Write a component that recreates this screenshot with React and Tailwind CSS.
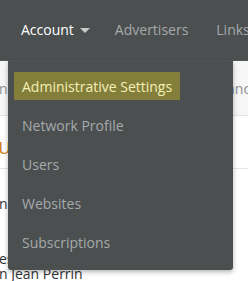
import React from "react";

const menuItems = [
  "Administrative Settings",
  "Network Profile",
  "Users",
  "Websites",
  "Subscriptions",
];

const App = () => {
  return (
    <div className="relative w-[248px] h-[281px] overflow-hidden bg-white font-['Open_Sans',sans-serif]">
      {/* NAVBAR */}
      <nav className="h-[61px] bg-[#4b4f50] border-b border-[#56595a] flex items-center pb-[2px] text-[14px] whitespace-nowrap">
        <div className="ml-[7px] w-px h-[43px] bg-[#595d5e]" />
        <div className="ml-[14px] flex items-center text-white">
          Account
          <span className="ml-[6px] mt-[2px] w-0 h-0 border-x-[5px] border-x-transparent border-t-[5px] border-t-[#c9cbcb]" />
        </div>
        <div className="ml-[25px] text-[#a5aaab]">Advertisers</div>
        <div className="ml-[28px] text-[#a5aaab]">Links</div>
      </nav>

      {/* PAGE BEHIND */}
      <div className="h-[55px] bg-[#f6f6f6] border-b border-[#e4e4e4] flex items-center justify-between text-[14px] text-[#8b9097] overflow-hidden">
        <span className="-ml-[1px]">n</span>
        <span className="-mr-[10px]">ance</span>
      </div>
      <div className="h-[53px] border-b border-[#e6e6e6] flex items-center pt-[6px] overflow-hidden">
        <span className="-ml-[2px] text-[22px] text-[#d8871e]">u</span>
      </div>
      <div className="text-[14px] text-[#333] leading-[15px] overflow-hidden whitespace-nowrap">
        <div className="mt-[27px] -ml-[1px]">ni:</div>
        <div className="mt-[40px] -ml-[1px]">es</div>
        <div className="-ml-[1px]">n Jean Perrin</div>
      </div>

      {/* DROPDOWN */}
      <div className="absolute left-[8px] top-[61px] w-[225px] h-[209px] bg-[#4b4f50] rounded-b-[3px] shadow-[0_2px_5px_rgba(0,0,0,0.3)] pt-[11px] pl-[6px]">
        <ul className="flex flex-col gap-[11px] text-[14px] whitespace-nowrap">
          {menuItems.map((item, index) => (
            <li key={item} className="h-[28px] flex">
              <span
                className={`h-[28px] flex items-center px-[8px] ${
                  index === 0
                    ? "bg-[#837f3a] text-[#f4f0b8]"
                    : "text-[#a5aaab]"
                }`}
              >
                {item}
              </span>
            </li>
          ))}
        </ul>
      </div>
    </div>
  );
};

export default App;
